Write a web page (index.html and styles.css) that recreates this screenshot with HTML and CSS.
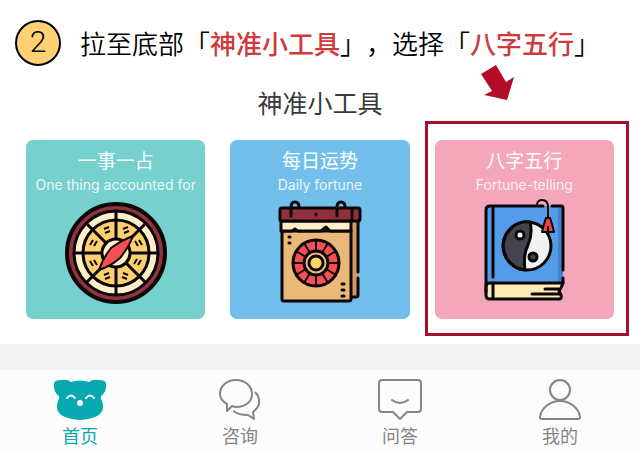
FILE: index.html
```html
<!DOCTYPE html>
<html lang="zh-CN">
<head>
  <meta charset="UTF-8">
  <meta name="viewport" content="width=device-width, initial-scale=1.0">
  <title>神准小工具</title>
  <link rel="stylesheet" href="styles.css">
</head>
<body>

  <!-- 步骤说明 -->
  <header class="step">
    <span class="step-number">2</span>
    <p class="step-text">拉至底部「<strong>神准小工具</strong>」，选择「<strong>八字五行</strong>」</p>
  </header>

  <!-- 小工具 -->
  <main class="tools">
    <h1>神准小工具</h1>
    <div class="tool-list">
      <a href="#" class="tool tool-green">
        <h2>一事一占</h2>
        <p>One thing accounted for</p>
        <svg width="102" height="102" viewBox="0 0 102 102" fill="none" stroke="#0b0708" stroke-width="3">
          <circle cx="51" cy="51" r="49" fill="#8f343b" stroke-width="4"/>
          <circle cx="51" cy="51" r="42" fill="#fff0c9"/>
          <circle cx="51" cy="51" r="33" fill="#fcd06f"/>
          <path d="M51 9v84M9 51h84M21 21l60 60M81 21L21 81"/>
          <circle cx="51" cy="51" r="14" fill="#fff0c9"/>
          <path stroke-width="2" d="M58 27l5-2M59 31l5-2M70 39l3 5M74 38l3 5M73 63l3-5M69 62l3-5M58 71l5 2M57 75l5 2M44 71l-5 2M45 75l-5 2M32 63l-3-5M28 64l-3-5M32 39l-3 5M28 38l-3 5M39 27l5-2M40 31l5-2"/>
          <path d="M68 34Q57 38 46 46Q38 56 34 68Q46 64 55 56Q64 45 68 34z" fill="#f84f55" stroke-width="2" stroke-linejoin="round"/>
        </svg>
      </a>
      <a href="#" class="tool tool-blue">
        <h2>每日运势</h2>
        <p>Daily fortune</p>
        <svg width="102" height="102" viewBox="0 0 102 102" fill="none" stroke="#0b0708" stroke-width="3" stroke-linecap="round" stroke-linejoin="round">
          <path d="M81 19h8v76h-8z" fill="#d49a62" stroke="none"/>
          <path d="M89 19v51M89 76v17q0 2-2 2h-5"/>
          <path d="M13 29h69v68q0 2-2 2H15q-2 0-2-2z" fill="#eab978"/>
          <path d="M12 19h70v10H61l-4-4-5 4H29l-3-2-3 2H12z" fill="#fff0c9"/>
          <path d="M13 6h76q2 0 2 2v9q0 2-2 2H13q-2 0-2-2V8q0-2 2-2z" fill="#923039"/>
          <path d="M83 7v12M22 14V5q0-5 4-5t4 5M68 14V5q0-5 4-5t4 5M47 12v1M20 35h1M20 41h1M73 82h2M73 88h2M73 94h2"/>
          <circle cx="47" cy="61" r="23" fill="#f84f55"/>
          <path stroke-width="2" d="M47 38v46M24 61h46M35 41l24 40M59 41L35 81M27 49l40 24M67 49L27 73"/>
          <circle cx="47" cy="61" r="12" fill="#eab978"/>
          <circle cx="47" cy="61" r="7" fill="#fcd75e"/>
        </svg>
      </a>
      <a href="#" class="tool tool-pink">
        <h2>八字五行</h2>
        <p>Fortune-telling</p>
        <svg width="102" height="102" viewBox="0 0 102 102" fill="none" stroke="#0b0708" stroke-width="3" stroke-linecap="round" stroke-linejoin="round">
          <path d="M13 4h77v77H13z" fill="#549ce9" stroke="none"/>
          <path d="M85 4h5v77h-5z" fill="#4382cd" stroke="none"/>
          <path d="M90 81H17q-4 0-4 4v8q0 4 4 4h70q2-1 1-4l-2-4 2-3z" fill="#fdebb6"/>
          <path d="M70 4H17q-4 0-4 4v82M79 4h9q2 0 2 2v62M90 76v5M20 5v70M20 82v14M72 87h14M59 92h28"/>
          <circle cx="54" cy="44" r="24" fill="#f1f1f3"/>
          <path d="M57 20Q60 32 55 43Q50 53 52 68A24 24 0 0 1 57 20z" fill="#45434d"/>
          <circle cx="47" cy="33" r="4" fill="#fff"/>
          <circle cx="60" cy="55" r="4" fill="#45434d"/>
          <path d="M64 2q1-4 5-4 6 0 6 7v11" stroke-width="2"/>
          <path d="M73 16h4l2 6 2 8H69l2-8z" fill="#ec463e" stroke-width="2"/>
          <path d="M75 25v4" stroke-width="2"/>
        </svg>
        <span class="highlight"></span>
        <svg class="arrow" width="34" height="36" viewBox="0 0 34 36" fill="#b50d27">
          <path d="M1 9L16 0l10 17 8-5-7 23-23-5 8-4z"/>
        </svg>
      </a>
    </div>
  </main>

  <!-- 底部导航 -->
  <nav class="tabbar">
    <a href="#" class="tab active">
      <svg width="54" height="42" viewBox="0 0 54 42">
        <path d="M8 1Q15 0 18 3Q27 0 36 3Q39 0 46 1Q52 1 53 4Q54 13 48 17Q47 19 49 22Q53 33 42 38Q27 44 12 38Q1 33 5 22Q7 19 6 17Q0 13 1 4Q2 1 8 1z" fill="#06a9af"/>
        <path d="M14 19q4-5 8 0M33 19q4-5 8 0" fill="none" stroke="#fff" stroke-width="2" stroke-linecap="round"/>
        <circle cx="27" cy="24" r="3" fill="#fff"/>
      </svg>
      <span>首页</span>
    </a>
    <a href="#" class="tab">
      <svg width="42" height="42" viewBox="0 0 42 42" fill="none" stroke="#858585" stroke-width="2" stroke-linejoin="round">
        <path d="M8 32V25Q1 21 1 15C1 7 8 1 17 1s16 6 16 14-7 13-16 13q-2 0-4-1z"/>
        <path d="M36 13q5 5 4 12-1 4-6 8l1 7-6-4q-9 0-15-4"/>
      </svg>
      <span>咨询</span>
    </a>
    <a href="#" class="tab">
      <svg width="44" height="42" viewBox="0 0 44 42" fill="none" stroke="#858585" stroke-width="2" stroke-linejoin="round" stroke-linecap="round">
        <path d="M4 1h36q3 0 3 3v26q0 3-3 3H29l-7 7-7-7H4q-3 0-3-3V4q0-3 3-3z"/>
        <path d="M14 21q8 6 16 0"/>
      </svg>
      <span>问答</span>
    </a>
    <a href="#" class="tab">
      <svg width="42" height="42" viewBox="0 0 42 42" fill="none" stroke="#858585" stroke-width="2" stroke-linejoin="round">
        <circle cx="21" cy="11" r="10"/>
        <path d="M21 22C10 22 2 30 1 38q0 2 2 2h36q2 0 2-2C40 30 32 22 21 22z"/>
      </svg>
      <span>我的</span>
    </a>
  </nav>

</body>
</html>
```
FILE: styles.css
```css
* {
  box-sizing: border-box;
}

body {
  font-family: Inter, "Noto Sans CJK SC", sans-serif;
  margin: 0;
  background-color: #fff;
}

h1, h2, p {
  margin: 0;
  font-weight: 400;
}

a {
  text-decoration: none;
}

svg {
  display: block;
  overflow: visible;
}

/* 步骤说明 */
.step {
  display: flex;
  align-items: center;
  gap: 19px;
  padding: 20px 15px 0;
}

.step-number {
  width: 46px;
  height: 46px;
  border: 2px solid #000;
  border-radius: 50%;
  background-color: #ffd074;
  font-family: Roboto, sans-serif;
  font-size: 30px;
  font-weight: 300;
  line-height: 40px;
  text-align: center;
}

.step-text {
  font-family: "Noto Sans CJK SC", sans-serif;
  font-size: 26px;
  font-weight: 350;
  line-height: 40px;
  color: #000;
  white-space: nowrap;
  text-spacing-trim: space-all;
}

.step-text strong {
  font-weight: 500;
  color: #d03a3c;
}

/* 小工具 */
.tools {
  padding: 18px 26px 25px;
  border-bottom: 26px solid #f2f2f2;
}

h1 {
  font-size: 25px;
  line-height: 40px;
  margin-bottom: 16px;
  text-align: center;
  color: #3a3a3a;
}

.tool-list {
  display: grid;
  grid-template-columns: repeat(3, 1fr);
  gap: 25px;
}

.tool {
  position: relative;
  display: flex;
  flex-direction: column;
  align-items: center;
  padding: 8px 0 15px;
  border-radius: 7px;
  color: #fff;
}

.tool-green {
  background-color: #76d0cd;
}

.tool-blue {
  background-color: #73bfec;
}

.tool-pink {
  background-color: #f4a6ba;
}

.tool h2 {
  font-size: 19px;
  line-height: 28px;
}

.tool p {
  font-size: 14px;
  line-height: 18px;
  margin-bottom: 8px;
  opacity: 0.85;
  white-space: nowrap;
}

/* 红框和箭头 */
.highlight {
  position: absolute;
  top: -19px;
  right: -15px;
  bottom: -17px;
  left: -10px;
  border: 3px solid #a40f2a;
}

.arrow {
  position: absolute;
  top: -75px;
  left: 45px;
}

/* 底部导航 */
.tabbar {
  display: grid;
  grid-template-columns: repeat(4, 1fr);
  padding: 9px 0 4px;
  background-color: #fcfcfc;
}

.tab {
  display: flex;
  flex-direction: column;
  align-items: center;
  gap: 3px;
  font-size: 18px;
  line-height: 26px;
  color: #858585;
}

.tab.active {
  color: #06a9af;
}
```
